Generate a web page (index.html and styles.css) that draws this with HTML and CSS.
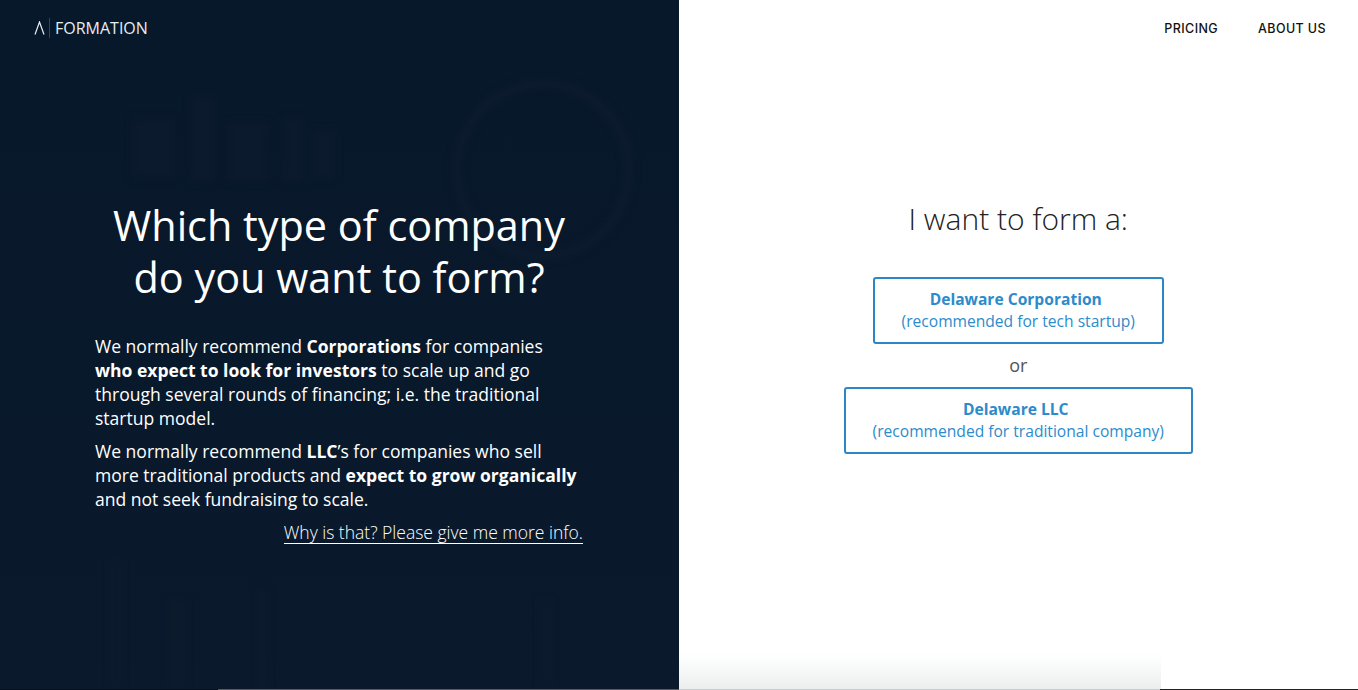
FILE: index.html
```html
<!DOCTYPE html>
<html lang="en">
<head>
<meta charset="UTF-8" />
<title>Formation</title>
<link rel="stylesheet" href="styles.css">
</head>
<body>
  <div class="page">
    <section class="left">
      <!-- faint photo behind the text -->
      <svg class="watermark" width="679" height="690" viewBox="0 0 679 690" fill="none">
        <g class="watermark-shapes">
          <circle cx="543" cy="170" r="86" stroke="#0c1b2d" stroke-width="10" />
          <path d="M132 118h44v60h-44zM190 96h26v86h-26zM228 122h40v60h-40zM282 118h22v64h-22zM312 130h24v48h-24z" fill="#0b1a2c" />
          <path d="M110 560h12v129h-12zM168 600h18v89h-18zM258 590h10v99h-10zM540 600h12v89h-12z" fill="#0b1b2d" />
        </g>
      </svg>

      <a class="logo" href="#">
        <svg class="logo-mark" width="11" height="14" viewBox="0 0 11 14" fill="none">
          <path d="M1 13.5 5.5 1 10 13.5" stroke="#e8edf2" stroke-width="1.2" />
        </svg>
        <span class="logo-sep"></span>
        <span class="logo-text">FORMATION</span>
      </a>

      <div class="left-body">
        <h1>Which type of company<br>do you want to form?</h1>
        <p>We normally recommend <b>Corporations</b> for companies<br><b>who expect to look for investors</b> to scale up and go<br>through several rounds of financing; i.e. the traditional<br>startup model.</p>
        <p>We normally recommend <b>LLC</b>’s for companies who sell<br>more traditional products and <b>expect to grow organically</b><br>and not seek fundraising to scale.</p>
        <div class="more"><a href="#">Why is that? Please give me more info.</a></div>
      </div>
    </section>

    <section class="right">
      <nav class="nav">
        <a href="#">PRICING</a>
        <a href="#">ABOUT US</a>
      </nav>

      <div class="right-body">
        <h2>I want to form a:</h2>
        <a class="choice choice-corp" href="#"><b>Delaware Corporation</b><br>(recommended for tech startup)</a>
        <div class="or">or</div>
        <a class="choice choice-llc" href="#"><b>Delaware LLC</b><br>(recommended for traditional company)</a>
      </div>

      <div class="fade"></div>
    </section>
  </div>
  <div class="edge"></div>
</body>
</html>
```

FILE: styles.css
```css
* {
  box-sizing: border-box;
}

html, body {
  height: 100%;
}

body {
  margin: 0;
  overflow: hidden;
  background-color: #fff;
  font-family: "Open Sans", "Liberation Sans", sans-serif;
}

a {
  text-decoration: none;
  color: inherit;
}

.page {
  display: flex;
  height: 690px;
}

.left {
  position: relative;
  width: 678.5px;
  flex-shrink: 0;
  padding: 18px 0 0 34px;
  background: linear-gradient(to bottom, #07182a, #0a1a2c);
  color: #fff;
  overflow: hidden;
}

.watermark {
  position: absolute;
  top: 0;
  left: 0;
}

.watermark-shapes {
  filter: blur(3px);
}

.logo {
  position: relative;
  display: flex;
  align-items: center;
  height: 20px;
  color: #e8edf2;
}

.logo-sep {
  width: 1px;
  height: 20px;
  margin: 0 5px 0 4px;
  background-color: #34445a;
}

.logo-text {
  font-size: 16px;
}

.left-body {
  position: relative;
  width: 488px;
  margin: 161px 0 0 61px;
}

h1 {
  width: 488px;
  margin: 0 0 31px;
  font-size: 41.4px;
  font-weight: 400;
  line-height: 52px;
  text-align: center;
}

.left-body p {
  margin: 0 0 9px;
  font-size: 17.55px;
  line-height: 24px;
  white-space: nowrap;
}

.more {
  font-size: 17.5px;
  font-weight: 300;
  line-height: 24px;
  text-align: right;
}

.more a {
  display: inline-block;
  border-bottom: 1px solid #fff;
  line-height: 22px;
}

.right {
  position: relative;
  flex: 1;
  color: #111;
}

.nav {
  display: flex;
  justify-content: flex-end;
  gap: 40px;
  padding: 21px 32px 0 0;
  font-family: "Inter", sans-serif;
  font-size: 12.5px;
  font-weight: 500;
  letter-spacing: 0.4px;
  line-height: 16px;
}

.right-body {
  display: flex;
  flex-direction: column;
  align-items: center;
  margin-top: 161px;
}

h2 {
  margin: 0 0 38px;
  font-size: 30px;
  font-weight: 300;
  line-height: 41px;
  color: #222;
}

.choice {
  display: block;
  height: 67px;
  padding-top: 9px;
  border: 2px solid #2d86c6;
  border-radius: 3px;
  font-size: 15.6px;
  line-height: 22px;
  text-align: center;
  color: #2d8bcb;
}

.choice b {
  display: inline-block;
  margin-right: 5px;
}

.choice-corp {
  width: 291px;
}

.choice-llc {
  width: 349px;
}

.or {
  margin: 10px 0 11px;
  font-size: 18px;
  line-height: 22px;
  color: #555;
}

.fade {
  position: absolute;
  left: 0;
  bottom: 0;
  width: 482px;
  height: 36px;
  background: linear-gradient(to bottom, rgba(236,238,238,0), #eceeee);
}

.edge {
  position: absolute;
  left: 0;
  right: 0;
  bottom: 0;
  height: 1px;
  background: linear-gradient(to right, #05101c 218px, #555c60 218px, #555c60 679px, #c9cccc 679px, #c9cccc 1160px, #222 1160px);
}
```
